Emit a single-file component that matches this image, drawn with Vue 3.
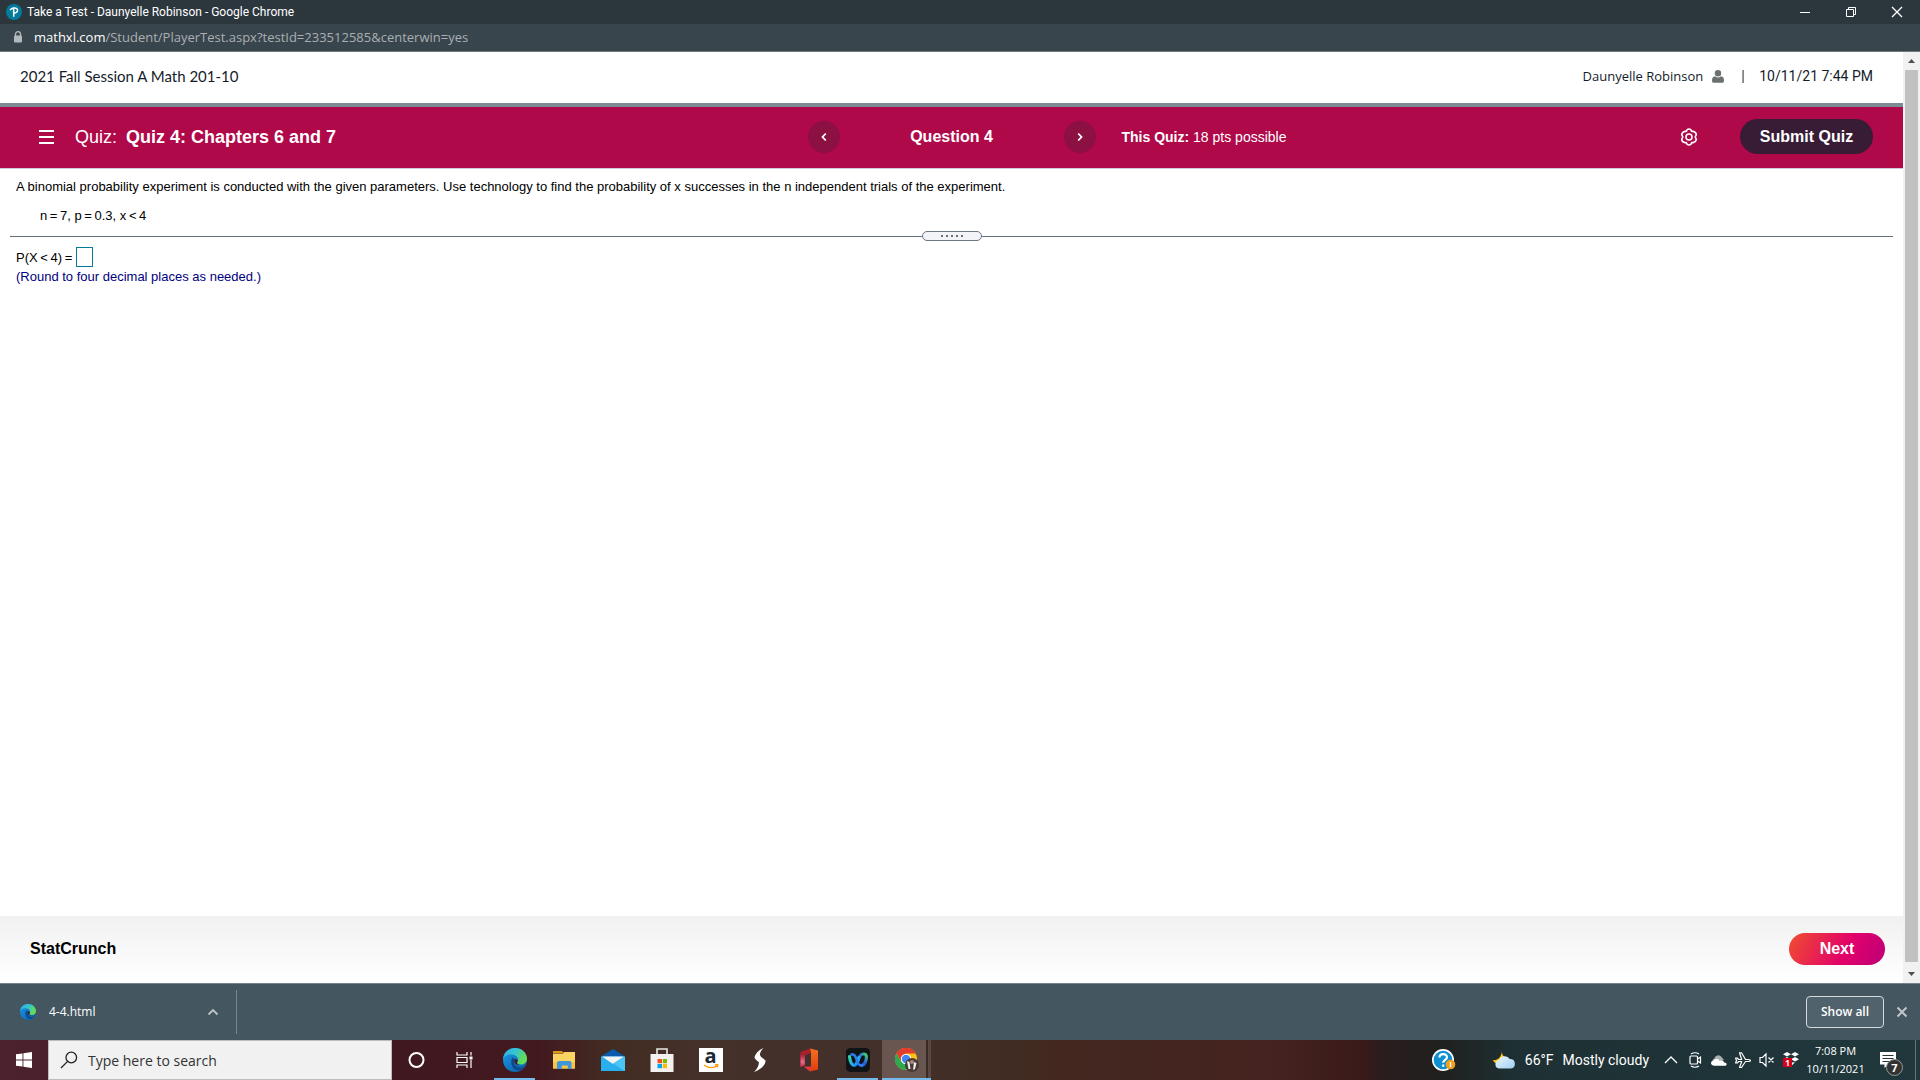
<script setup>
import { ref } from 'vue'

const answer = ref('')
const search = ref('')
</script>

<template>
  <div class="screen">
    <header class="titlebar">
      <svg class="favicon" viewBox="0 0 16 16" aria-hidden="true">
        <circle cx="8" cy="8" r="8" fill="#047a9c" />
        <path d="M4.300 6.300C5 3.600 11 2.800 11.500 6c.3 2.200-1.800 3.200-3.800 3M7.700 5v7.800" fill="none" stroke="#fff" stroke-width="1.500" />
      </svg>
      <span class="window-title">Take a Test - Daunyelle Robinson - Google Chrome</span>
      <div class="window-buttons">
        <button type="button" aria-label="Minimize">
          <svg viewBox="0 0 12 12" width="12" height="12"><path d="M1 6.500h10" stroke="#fff" fill="none" /></svg>
        </button>
        <button type="button" aria-label="Restore">
          <svg viewBox="0 0 12 12" width="12" height="12"><path d="M1.500 3.500h7v7h-7zM3.500 3.500v-2h7v7h-2" stroke="#fff" fill="none" /></svg>
        </button>
        <button type="button" aria-label="Close">
          <svg viewBox="0 0 12 12" width="12" height="12"><path d="M1 1l10 10M11 1L1 11" stroke="#fff" stroke-width="1.300" fill="none" /></svg>
        </button>
      </div>
    </header>

    <div class="urlbar">
      <svg viewBox="0 0 10 12" width="10" height="12" aria-hidden="true">
        <path d="M2.500 5V3.200a2.500 2.500 0 0 1 5 0V5" fill="none" stroke="#b4b9bc" stroke-width="1.300" />
        <rect x="1" y="4.500" width="8" height="7" rx="1" fill="#b4b9bc" />
      </svg>
      <span class="url"><b>mathxl.com</b>/Student/PlayerTest.aspx?testId=233512585&amp;centerwin=yes</span>
    </div>

    <div class="viewport">
      <div class="page">
        <div class="course-bar">
          <span class="course">2021 Fall Session A Math 201-10</span>
          <div class="account">
            <span class="user">Daunyelle Robinson</span>
            <svg class="user-icon" viewBox="0 0 12 13" width="12" height="13" aria-hidden="true">
              <circle cx="6" cy="3.300" r="3.200" fill="#6a7070" />
              <path d="M3 6.200a4.500 4.500 0 0 0 6 0c2 .2 3 1.600 3 4.300 0 1.600-.6 2.300-2 2.300H2c-1.400 0-2-.7-2-2.300 0-2.700 1-4.100 3-4.300z" fill="#6a7070" />
            </svg>
            <span class="pipe">|</span>
            <time class="stamp">10/11/21 7:44 PM</time>
          </div>
        </div>

        <div class="quiz-bar">
          <div class="quiz-name">
            <button type="button" class="plain" aria-label="Menu">
              <svg viewBox="0 0 15 14" width="15" height="14"><path d="M0 1h15M0 7h15M0 13h15" stroke="#fff" stroke-width="2" /></svg>
            </button>
            <h1>Quiz: <b>Quiz 4: Chapters 6 and 7</b></h1>
          </div>
          <nav class="question-nav">
            <button type="button" class="round" aria-label="Previous question">
              <svg viewBox="0 0 8 10" width="8" height="10"><path d="M5.800 1.500L2.500 5l3.300 3.500" fill="none" stroke="#fff" stroke-width="1.800" /></svg>
            </button>
            <h2>Question 4</h2>
            <button type="button" class="round" aria-label="Next question">
              <svg viewBox="0 0 8 10" width="8" height="10"><path d="M2.200 1.500L5.500 5 2.200 8.500" fill="none" stroke="#fff" stroke-width="1.800" /></svg>
            </button>
          </nav>
          <div class="quiz-side">
            <p class="points"><b>This Quiz:</b> 18 pts possible</p>
            <button type="button" class="plain gear" aria-label="Settings">
              <svg viewBox="0 0 18 18" width="18" height="18" fill="none" stroke="#fff" stroke-width="1.600">
                <path d="M7 1.800Q9 .2 11 1.800L11.700 3.400 13.500 3.400Q16.200 4.200 16.300 6.600L15.200 9 16.300 11.400Q16 13.900 13.500 14.600L11.700 14.600 11 16.200Q9 17.800 7 16.200L6.300 14.600 4.500 14.600Q1.900 13.800 1.700 11.400L2.800 9 1.700 6.600Q2 4.100 4.500 3.400L6.300 3.400Z" stroke-linejoin="round" />
                <circle cx="9" cy="9" r="3" />
              </svg>
            </button>
            <button type="button" class="submit">Submit Quiz</button>
          </div>
        </div>

        <main class="exercise">
          <p class="prompt">A binomial probability experiment is conducted with the given parameters. Use technology to find the probability of x successes in the n independent trials of the experiment.</p>
          <p class="params">n&thinsp;=&thinsp;7, p&thinsp;=&thinsp;0.3, x&thinsp;&lt;&thinsp;4</p>
          <div class="splitter">
            <span class="rule"></span>
            <button type="button" class="grip" aria-label="Resize panes"><i v-for="n in 5" :key="n"></i></button>
            <span class="rule"></span>
          </div>
          <div class="answer">
            <label for="answer">P(X&thinsp;&lt;&thinsp;4)&thinsp;=</label>
            <input id="answer" v-model="answer" type="text" />
          </div>
          <p class="hint">(Round to four decimal places as needed.)</p>
        </main>

        <footer class="page-footer">
          <a href="#">StatCrunch</a>
          <button type="button" class="next">Next</button>
        </footer>
      </div>
      <div class="scrollbar" aria-hidden="true">
        <svg viewBox="0 0 17 17" width="17" height="17"><path d="M5 11l3.500-4L12 11z" fill="#505050" /></svg>
        <span class="thumb"></span>
        <svg viewBox="0 0 17 17" width="17" height="17"><path d="M5 6l3.500 4L12 6z" fill="#505050" /></svg>
      </div>
    </div>

    <svg class="defs" aria-hidden="true">
      <defs>
        <linearGradient id="edgeBase" x1="0" y1="0" x2="1" y2="1"><stop offset="0" stop-color="#1a9be8" /><stop offset="1" stop-color="#0c59a4" /></linearGradient>
        <linearGradient id="edgeWave" x1="0" y1="0" x2="1" y2=".5"><stop offset="0" stop-color="#2fa9ee" /><stop offset=".5" stop-color="#36c3d0" /><stop offset="1" stop-color="#66de4f" /></linearGradient>
        <linearGradient id="officeSide" x1="0" y1="0" x2="0" y2="1"><stop offset="0" stop-color="#a4172a" /><stop offset=".6" stop-color="#ec6a8c" /><stop offset="1" stop-color="#c43050" /></linearGradient>
        <linearGradient id="officeFront" x1="0" y1="0" x2="0" y2="1"><stop offset="0" stop-color="#f87020" /><stop offset="1" stop-color="#e03c10" /></linearGradient>
        <linearGradient id="webexLeft" x1="0" y1="0" x2="1" y2="1"><stop offset="0" stop-color="#35d3a0" /><stop offset=".6" stop-color="#1cb0f0" /><stop offset="1" stop-color="#1879f0" /></linearGradient>
        <linearGradient id="webexRight" x1="1" y1="0" x2="0" y2="1"><stop offset="0" stop-color="#49d06a" /><stop offset=".5" stop-color="#2458e8" /><stop offset="1" stop-color="#30a0f8" /></linearGradient>
        <linearGradient id="cloudFill" x1="0" y1="0" x2="1" y2="1"><stop offset="0" stop-color="#eef8ff" /><stop offset="1" stop-color="#9fcdf0" /></linearGradient>
        <symbol id="edge" viewBox="0 0 24 24">
          <circle cx="12" cy="12" r="12" fill="url(#edgeBase)" />
          <path d="M0 11C1 3.500 6.500 0 12 0c7 0 12 5 12 10.500 0 4-3 6-6 6-2.500 0-4.200-1-3.700-2.400.4-1 1-1.600.8-3C14.700 8.400 11.500 6.500 8 6.500 4 6.500 1 8.500 0 11z" fill="url(#edgeWave)" />
          <path d="M9.500 9.500C6.500 14 9 21.500 15 22.500c3-.2 5.500-2 7-4.300-4 2.200-8.500 1.200-10-1.200-1.500-2.300-.7-4.400.2-5.400z" fill="#10498a" />
          <path d="M12.200 11.300c1-.4 2.500.2 2.500 1.500 0 1.200-1.200 1.500-.6 2.700.5.900 2 1.300 3.400 1.200-3 .6-6-.6-6-3.200 0-.9.200-1.600.7-2.200z" fill="#431a24" />
        </symbol>
      </defs>
    </svg>

    <section class="downloads" aria-label="Downloads">
      <button type="button" class="file">
        <svg width="16" height="16" aria-hidden="true"><use href="#edge" /></svg>
        <span>4-4.html</span>
        <svg viewBox="0 0 12 8" width="12" height="8" aria-hidden="true"><path d="M1.500 6.500L6 2l4.500 4.500" fill="none" stroke="#bcc2c5" stroke-width="1.800" /></svg>
      </button>
      <button type="button" class="show-all">Show all</button>
      <button type="button" class="plain dismiss" aria-label="Close downloads">
        <svg viewBox="0 0 12 12" width="12" height="12"><path d="M1.500 1.500l9 9M10.500 1.500l-9 9" stroke="#c3c9cb" stroke-width="1.900" /></svg>
      </button>
    </section>

    <div class="taskbar">
      <button type="button" class="start" aria-label="Start">
        <svg viewBox="0 0 16 16" width="16" height="16" fill="#fff"><path d="M0 2.300l6.500-.9v6.100H0zM7.400 1.300L16 0v7.500H7.400zM0 8.400h6.500v6.200L0 13.700zM7.400 8.400H16V16l-8.600-1.200z" /></svg>
      </button>
      <label class="searchbox">
        <svg viewBox="0 0 18 18" width="18" height="18" fill="none" stroke="#222" stroke-width="1.300"><circle cx="11.300" cy="6.500" r="5.300" /><path d="M7.600 10.400L1 17" /></svg>
        <input v-model="search" type="text" placeholder="Type here to search" aria-label="Search" />
      </label>
      <div class="apps">
        <button type="button" aria-label="Cortana"><svg viewBox="0 0 24 24"><circle cx="11.500" cy="12" r="7" fill="none" stroke="#fff" stroke-width="2" /></svg></button>
        <button type="button" aria-label="Task view">
          <svg viewBox="0 0 24 24" fill="none" stroke="#fff" stroke-width="1.200"><path d="M3 4v3h10V4M3 20v-3h10v3M3 9.500h10v5H3zM17 4v3.500M17 12v8" /><path d="M15.500 8.500h3v3h-3z" fill="#fff" stroke="none" /></svg>
        </button>
        <button type="button" class="running" aria-label="Edge"><svg><use href="#edge" /></svg></button>
        <button type="button" aria-label="File Explorer">
          <svg viewBox="0 0 24 24"><path d="M1 3h9l1.500 2H1z" fill="#e09a10" /><path d="M1 5.500h10l1-1.500h11v16.500H1z" fill="#fcd462" /><path d="M1 14h22v6.500H1z" fill="#f9c440" /><path d="M5 21v-6q0-2 2-2h10.500q2 0 2 2v6h-3.700v-3.500h-6V21z" fill="#3d97dc" /></svg>
        </button>
        <button type="button" aria-label="Mail">
          <svg viewBox="0 0 24 24"><path d="M0 8.500L12 1l12 7.500v1H0z" fill="#0a5aad" /><path d="M0 8.500h24V23H0z" fill="#29aeee" /><path d="M1 8.500h22L12 16z" fill="#f3f3f3" /><path d="M12 15.500L24 23V8.500z" fill="#4cc4f6" /></svg>
        </button>
        <button type="button" aria-label="Microsoft Store">
          <svg viewBox="0 0 24 24"><path d="M7 6V1h10v5" fill="none" stroke="#e8e8e8" stroke-width="1.600" /><path d="M.5 6h23v18H.5z" fill="#f2f1f0" /><path d="M7.500 11H12v4.200H7.500z" fill="#f25022" /><path d="M12.800 11h4.200v4.200h-4.200z" fill="#7fba00" /><path d="M7.500 16H12v4.200H7.500z" fill="#00a4ef" /><path d="M12.800 16h4.200v4.200h-4.200z" fill="#ffb900" /></svg>
        </button>
        <button type="button" aria-label="Amazon">
          <span class="amazon"><b>a</b><svg viewBox="0 0 16 5"><path d="M1 1c4 3.300 9.500 3.300 13 .8M12 .8l2.800-.1-.5 2.600" fill="none" stroke="#f90" stroke-width="1.300" /></svg></span>
        </button>
        <button type="button" aria-label="Streamlabs">
          <svg viewBox="0 0 24 24" fill="#fff"><path d="M15.500 0c-5 2-8 5.500-9 9 .2 2.500 3.500 4.200 5 5.800l6-1.800c-1.500-2.500-5-3.700-5.500-6C11.700 4.700 13.500 2 15.500 0z" /><path d="M11 13.500l6.500-1.300c.5 4.500-5 9.800-11.500 11.800 3-3 5-6.500 5-10.500z" /></svg>
        </button>
        <button type="button" aria-label="Office">
          <svg viewBox="0 0 24 24"><path d="M13 .5L3.500 4v15l4-2V7.500L14 5z" fill="#a8202a" /><path d="M3.500 6v13l4.300-2V7z" fill="url(#officeSide)" /><path d="M6.500 18.500h8V22L13 23.500z" fill="#e03848" /><path d="M13 .5L21 2.500v19l-8 2 1-3V4z" fill="url(#officeFront)" /></svg>
        </button>
        <button type="button" class="running" aria-label="Webex">
          <svg viewBox="0 0 24 24" fill="none" stroke-linecap="round"><rect width="24" height="24" rx="4.500" fill="#101416" /><path d="M12 13c1-4.500 3-7 5.700-7 3 0 3.200 3.500 2 7-.9 2.700-2.200 4.300-4 4.300" stroke="url(#webexRight)" stroke-width="3.200" /><path d="M3.500 8.500c.6 4.500 2.200 8.800 4.700 8.800 2.800 0 3.300-4.300 4.800-8" stroke="url(#webexLeft)" stroke-width="3.200" /><path d="M5.500 6.500c2.500-.6 4 1.500 5 5s2 5.600 4.200 5.800" stroke="#2b7df2" stroke-width="2.600" /></svg>
        </button>
        <button type="button" class="running current" aria-label="Chrome">
          <svg viewBox="0 0 24 24"><circle cx="11" cy="11" r="11" fill="#fbc116" /><path d="M1.400 5.500A11 11 0 0 1 20.600 5.500H11L6.200 13.800z" fill="#e33b2e" /><path d="M1.400 5.500A11 11 0 0 0 11 22l4.800-8.200H6.200z" fill="#2da94f" /><circle cx="11" cy="11" r="5.200" fill="#fff" /><circle cx="11" cy="11" r="4.200" fill="#4286f3" /><circle cx="17" cy="17" r="7" fill="#4a3a36" /><circle cx="17" cy="14" r="2" fill="#a98a78" /><path d="M12 13l2.500 1 1 7h-2zM19 14l2.500 1-1.500 6-2 1z" fill="#eee" /></svg>
        </button>
      </div>

      <div class="tray">
        <button type="button" class="help" aria-label="Get help">
          <svg viewBox="0 0 24 22" width="24" height="22"><circle cx="11" cy="11" r="11" fill="#fff" /><circle cx="11" cy="11" r="9.300" fill="#0e8fd0" /><path d="M7.500 8.500c0-4.500 7.500-4.500 7.500-.3 0 2.800-3.800 2.600-3.800 5.600M11.200 15.500v2.200" fill="none" stroke="#fff" stroke-width="2.200" /><circle cx="18.500" cy="15.500" r="4.800" fill="#f0a01c" /><path d="M18.500 13v5" stroke="#fff" stroke-width="1.300" /></svg>
        </button>
        <button type="button" class="weather">
          <svg viewBox="0 0 24 20" width="24" height="20" aria-hidden="true"><path d="M10 .5c-.5 3 .8 6 3.800 7.500L6 14C3.500 13.500 1.500 12 1 10c5 1 9-4 9-9.500z" fill="#ffc916" /><path d="M7 18.500a4.300 4.300 0 0 1 .2-8.500 6 6 0 0 1 10.600-1 4.800 4.800 0 0 1 1.200 9.500z" fill="url(#cloudFill)" /></svg>
          <span>66°F</span><span>Mostly cloudy</span>
        </button>
        <div class="tray-icons">
          <svg viewBox="0 0 16 16"><path d="M2 11l6-6 6 6" fill="none" stroke="#fff" stroke-width="1.300" /></svg>
          <svg viewBox="0 0 16 16" fill="none" stroke="#fff" stroke-width="1.200"><rect x="3" y="4" width="7.500" height="8" rx="1" /><path d="M10.500 7l3-2v6l-3-2M4 2q4-2.500 8 0M4 14q4 2.500 8 0" /></svg>
          <svg viewBox="0 0 16 16"><path d="M3 12a3 3 0 0 1 .3-5.500A4 4 0 0 1 10.500 5L13 8z" fill="#a9b0b2" /><path d="M1.500 13.300c-2.300-1-1.800-4.300.7-4.600 2-2.400 5.500-2 6.500.2 2-1 4.300.2 4.300 1.600 3-.3 3.500 2.800 1 3.300H3z" fill="#fff" /></svg>
          <svg viewBox="0 0 16 16"><path d="M.6 6h1.600l1.500 1.500h3L4.500.8h2l4 6.700h3q2 .4 2 1t-2 1h-3l-4 6h-2l2.200-6h-3L2.200 11H.6l.9-2.500z" fill="none" stroke="#fff" stroke-width="1.200" stroke-linejoin="round" /></svg>
          <svg viewBox="0 0 16 16"><path d="M1 5.500h2.500L7 2v12l-3.500-3.500H1zM9.500 5.500l5 5M14.500 5.500l-5 5" fill="none" stroke="#fff" stroke-width="1.200" /></svg>
          <span class="dropbox">
            <svg viewBox="0 0 16 16" fill="#fff"><path d="M4 0l4 2.300L4 4.600 0 2.300zM12 0l4 2.300-4 2.300-4-2.300zM12 5l4 2.300-4 2.300-4-2.300zM4 5l4 2.300-4 2.300L0 7.300zM8 10.500l4-.3-3 3z" /></svg>
            <b>1</b>
          </span>
        </div>
        <div class="clock"><span>7:08 PM</span><span>10/11/2021</span></div>
        <button type="button" class="notices" aria-label="Notifications">
          <svg viewBox="0 0 16 16" width="16" height="16"><path d="M0 0h16v12.500H8L4.500 16v-3.500H0z" fill="#fff" /><path d="M2.500 3.500h11M2.500 6.500h11M2.500 9.500h7" stroke="#20363a" /></svg>
          <b>7</b>
        </button>
      </div>
    </div>
  </div>
</template>

<style>
body {
  margin: 0;
}
</style>

<style scoped>
.screen {
  display: flex;
  flex-direction: column;
  min-height: 100vh;
  font-family: "Liberation Sans", Arial, sans-serif;
  color: #000;
  background: #fff;
}
*,
*::before,
*::after {
  box-sizing: border-box;
}
button {
  display: flex;
  align-items: center;
  justify-content: center;
  margin: 0;
  padding: 0;
  border: 0;
  background: none;
  color: inherit;
  font: inherit;
  white-space: nowrap;
}
input {
  font: inherit;
}
p,
h1,
h2 {
  margin: 0;
}
.defs {
  position: absolute;
  width: 0;
  height: 0;
}

.titlebar {
  display: flex;
  align-items: center;
  height: 24px;
  padding-left: 6px;
  background: #2c373d;
  color: #fff;
  font: 12px/16px Roboto, sans-serif;
}
.favicon {
  width: 16px;
  height: 16px;
  margin-right: 5px;
}
.window-buttons {
  display: flex;
  margin-left: auto;
}
.window-buttons button {
  width: 46px;
  height: 20px;
}
.urlbar {
  display: flex;
  align-items: center;
  gap: 11px;
  height: 28px;
  padding: 0 0 2px 13px;
  background: #39454c;
  border-bottom: 1px solid #707b80;
  color: #a9afb3;
  font: 13px/20px "Open Sans", sans-serif;
}
.url b {
  color: #fff;
  font-weight: 400;
}

.viewport {
  display: flex;
  flex: 1;
}
.page {
  display: flex;
  flex: 1;
  flex-direction: column;
}
.course-bar {
  display: flex;
  align-items: center;
  justify-content: space-between;
  height: 55px;
  padding: 0 30px 3px 20px;
  border-bottom: 4px solid #7d8a94;
  color: #151c2b;
  font: 15px/20px Lato, sans-serif;
}
.account {
  display: flex;
  align-items: center;
}
.user {
  font: 13px/20px "Open Sans", sans-serif;
}
.user-icon {
  margin: 0 17px 0 9px;
}
.pipe {
  width: 18px;
  font-size: 14px;
}
.stamp {
  font: 14px/20px Roboto, sans-serif;
}
.quiz-bar {
  display: grid;
  grid-template-columns: 1fr 288px 1fr;
  align-items: center;
  height: 62px;
  padding-bottom: 2px;
  background: #b00949;
  border-bottom: 1px solid #c9ced6;
  color: #fff;
}
.quiz-name {
  display: flex;
  align-items: center;
  gap: 21px;
  padding-left: 39px;
}
.quiz-name h1 {
  font-size: 18px;
  font-weight: 400;
  line-height: 24px;
}
.quiz-name b {
  margin-left: 4px;
}
.question-nav {
  display: flex;
  align-items: center;
  justify-content: space-between;
}
.question-nav h2 {
  font-size: 16px;
  line-height: 24px;
}
.round {
  width: 32px;
  height: 32px;
  border-radius: 50%;
  background: #8c1042;
}
.quiz-side {
  display: flex;
  align-items: center;
  padding: 0 30px 0 26px;
}
.points {
  font-size: 14px;
  line-height: 20px;
}
.gear {
  margin: 0 42px 0 auto;
}
.submit {
  width: 133px;
  height: 35px;
  border-radius: 18px;
  background: #381c35;
  font-size: 16px;
  font-weight: 700;
}

.exercise {
  flex: 1;
  padding: 8px 10px;
  font-size: 13px;
  line-height: 19px;
}
.prompt,
.answer,
.hint {
  padding-left: 6px;
}
.params {
  padding: 10px 0 0 30px;
}
.splitter {
  display: flex;
  align-items: center;
  margin-top: 6px;
}
.rule {
  flex: 1;
  height: 1px;
  background: #5f6f7b;
}
.grip {
  gap: 3px;
  width: 60px;
  height: 10px;
  border: 1px solid #6b7986;
  border-radius: 5px;
  background: #f3f4f7;
}
.grip i {
  width: 2px;
  height: 2px;
  background: #6a7070;
}
.answer {
  display: flex;
  align-items: center;
  gap: 4px;
  margin-top: 6px;
}
.answer input {
  width: 17px;
  height: 20px;
  padding: 0 2px;
  border: 1px solid #047a9c;
}
.hint {
  color: #000080;
}
.page-footer {
  display: flex;
  align-items: center;
  justify-content: space-between;
  height: 67px;
  padding: 0 18px 2px 30px;
  background: linear-gradient(#f1f1f1, #fff);
}
.page-footer a {
  color: #000;
  font-size: 16px;
  font-weight: 700;
  text-decoration: none;
}
.next {
  width: 96px;
  height: 32px;
  border-radius: 16px;
  background: linear-gradient(115deg, #f04d30, #e1006a 60%, #bd0078);
  color: #fff;
  font-size: 16px;
  font-weight: 700;
}
.scrollbar {
  display: flex;
  flex-direction: column;
  width: 17px;
  background: #f1f1f1;
}
.thumb {
  flex: 1;
  margin: 1px 2px 4px;
  background: #c1c1c1;
}

.downloads {
  display: flex;
  align-items: center;
  height: 57px;
  padding-right: 12px;
  border-top: 1px solid #74828a;
  background: #44565f;
  color: #fff;
  font: 12px/16px "Open Sans", sans-serif;
}
.file {
  justify-content: flex-start;
  width: 237px;
  height: 44px;
  padding: 0 17px 0 20px;
  border-right: 1px solid #7c888e;
}
.file span {
  margin: 0 auto 0 13px;
}
.show-all {
  width: 78px;
  height: 32px;
  margin-left: auto;
  border: 1px solid #d5d9db;
  border-radius: 4px;
  background: #50626b;
  font-weight: 600;
}
.dismiss {
  margin-left: 12px;
}

.taskbar {
  display: flex;
  height: 40px;
  background: linear-gradient(90deg, #4b222d 0, #40181f 20%, #42191f 28%, #422c22 32%, #45302a 36%, #43302a 46%, #402c22 53%, #432820 55%, #452320 66%, #3e1e1c 69%, #3a1919 71%, #2a1d1e 72%, #20201e 75%, #1e3034 79%, #20383c 100%);
  color: #fff;
  font-family: "Open Sans", sans-serif;
}
.start {
  width: 48px;
}
.searchbox {
  display: flex;
  align-items: center;
  gap: 10px;
  width: 344px;
  padding-left: 11px;
  border: 1px solid #bdbdbd;
  background: #f1f1f1;
}
.searchbox input {
  flex: 1;
  min-width: 0;
  padding: 0;
  border: 0;
  background: none;
  font-size: 14px;
}
.searchbox input::placeholder {
  color: #333;
  opacity: 1;
}
.apps {
  display: flex;
}
.apps button {
  position: relative;
  width: 49px;
  height: 40px;
}
.apps button > svg {
  width: 24px;
  height: 24px;
}
.running::after {
  content: "";
  position: absolute;
  right: 4px;
  bottom: 0;
  left: 4px;
  height: 2px;
  background: #76b9ed;
}
.apps .current {
  background: linear-gradient(90deg, #6a5650 44px, #3a2a26 44px, #3a2a26 46px, #5a4741 46px);
}
.current::after {
  right: 0;
  left: 0;
}
.amazon {
  display: flex;
  flex-direction: column;
  align-items: center;
  width: 24px;
  height: 24px;
  background: #fff;
  color: #1c2733;
  font-size: 20px;
  line-height: 16px;
}
.amazon svg {
  width: 16px;
  height: 5px;
}
.tray {
  display: flex;
  align-items: center;
  margin-left: auto;
}
.help {
  margin-right: 36px;
}
.weather {
  font: 14px/20px Roboto, sans-serif;
}
.weather span {
  margin-left: 9px;
}
.tray-icons {
  display: flex;
  gap: 8px;
  margin-left: 14px;
}
.tray-icons svg {
  display: block;
  width: 16px;
  height: 16px;
}
.dropbox {
  position: relative;
}
.dropbox b {
  position: absolute;
  top: 6px;
  left: 0;
  width: 9px;
  height: 9px;
  background: #d6001c;
  font-size: 8px;
  line-height: 9px;
  text-align: center;
}
.clock {
  display: flex;
  flex-direction: column;
  align-items: center;
  width: 73px;
  font-size: 11px;
  line-height: 18px;
}
.notices {
  position: relative;
  width: 44px;
  height: 40px;
  padding-right: 12px;
  border-right: 1px solid #667679;
  margin-right: 4px;
}
.notices b {
  position: absolute;
  right: 12px;
  bottom: 4px;
  width: 17px;
  height: 17px;
  border: 1px solid #999;
  border-radius: 50%;
  background: #333;
  font-size: 11px;
  line-height: 15px;
}
</style>
